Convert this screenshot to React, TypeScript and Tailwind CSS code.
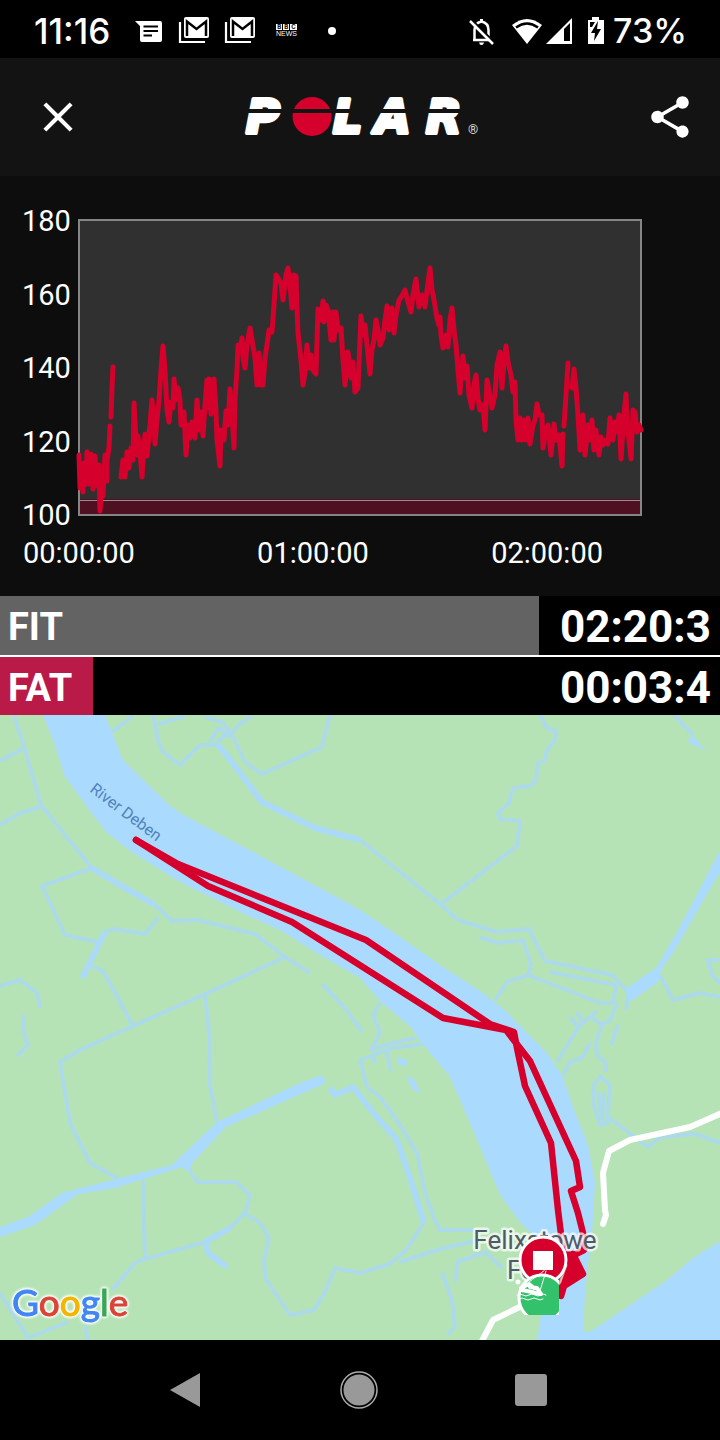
import React from "react";
import { MdClose, MdShare } from "react-icons/md";

const HEART_RATE: string[] = [
  "79,455 80,488 81,465 83,492 84,463 86,484 87,452 89,484 91,454 93,489 95,456 97,486 99,465 100,511 102,478 103,496 105,455 107,481 107,460 109,448 110,426",
  "111,417 112,388 113,367",
  "121,477 123,460 125,477 127,452 129,468 131,448 133,460 134,403 136,440 138,455 138,436 140,452 142,477 144,446 145,434 147,456 149,436",
  "149,434 150,425 152,400 155,444 157,420 159,400 161,370 163,346 165,370 167,410 169,422 171,402 173,408 174,379 176,400 178,388 180,400 181,425 184,412 186,455 188,425 190,438 192,422 195,438 197,400 199,430 201,412 203,436 205,405 207,380 209,408 209,379 211,414 214,379 216,412 217,440 220,466 221,430 224,440 226,411 228,425 230,389 232,415 234,448 235,400 237,370 238,345 240,353 242,338 243,358 245,368 247,345 250,328 252,340 255,358 257,385 259,353 261,385 263,385 265,358 267,345 269,330 272,332 274,305 276,275 278,278 281,283 283,300 286,275 288,268 290,285 292,308 294,275 296,276 297,310 298,333 301,360 303,385 305,373 307,345 309,368 311,355 313,370 316,374 318,309 321,320 323,301 324,322 326,305 328,310 331,340 333,312 334,340 336,312 338,330 341,328 343,360 345,385 348,352 351,378 353,362 355,392 358,388 360,340 361,316 363,335 365,325 367,345 370,374 372,350 374,340 376,320 378,330 380,345 383,338 385,320 387,306 389,330 392,308 394,333 396,315 399,300 402,296 405,290 408,302 411,312 413,295 416,279 419,307 422,295 425,307 427,290 430,268 432,290 434,300 437,318 439,325 440,317 441,335 443,348 446,335 448,347 450,320 452,308 454,330 456,345 458,370 460,393 463,356 465,378 467,366 469,395 472,408 474,385 476,375 478,398 480,410 483,405 485,430 487,380 489,390 492,408 495,395 497,365 500,352 502,388 504,360 506,346 508,362 511,375 513,392 515,382 516,420 518,440 520,418 522,440 524,420 526,440 528,418 530,444 533,425 535,420 537,404 539,415 542,415 543,448 546,430 548,425 551,455 554,424 556,440 559,435 562,466 563,434",
  "564,426 566,395 568,363",
  "572,388 574,369 576,388 578,415 580,450 583,415 585,455 588,425 590,440 592,420 594,450 596,430 599,455 601,437 603,445 605,440 608,444 610,418 613,440 615,422 617,432 619,415 621,459 624,415 626,394 627,420 629,440 631,459 633,410 635,412 637,432 639,425 641,430",
];

const DITCHES: string[] = [
  "14,715 25,750 41,805 65,835 92,868",
  "155,905 172,921 198,920 255,934 285,957 310,973",
  "322,984 345,1008 362,1032",
  "0,761 22,749",
  "0,825 20,813 38,808 41,803",
  "92,868 42,886 65,935 98,942",
  "105,932 115,929 145,934 158,918",
  "92,966 103,971 133,1026",
  "0,986 20,980 37,993 40,1008",
  "23,1015 24,1033 28,1045 17,1056",
  "283,958 205,994 133,1026 80,1050 60,1062 70,1123 90,1163 117,1178",
  "205,994 209,1033 210,1085 217,1122",
  "112,732 133,716",
  "153,715 158,740 163,752 180,765 200,745 218,745",
  "360,840 440,904 458,920 497,932 529,929 545,961 612,975 628,992",
  "158,724 185,716",
  "205,717 222,722 232,735 245,762 262,774 322,747 330,715",
  "232,733 240,724 252,716",
  "210,742 218,728 230,736",
  "216,743 224,736 232,735",
  "540,715 547,728 556,731 555,740 547,750 545,760 538,763 536,780 530,786 513,788 509,803 498,813 500,819 520,821 517,846 441,904",
  "674,715 693,735",
  "480,937 497,943 523,940 531,965 528,975 507,982 495,1000",
  "528,975 600,1003 613,1003 616,985 550,972",
  "660,975 673,1000 700,993 720,997",
  "720,960 708,960 712,975 720,983",
  "628,992 626,1010",
  "557,1062 580,1025 597,1011",
  "570,1017 578,1027",
  "577,1012 582,1022",
  "617,1003 610,1020 602,1025 592,1018",
  "602,1025 596,1043 597,1055 605,1062 606,1072",
  "590,1043 582,1058 570,1062 563,1075",
  "618,1025 611,1045",
  "602,1075 594,1085 593,1102 600,1125 607,1123 610,1085 602,1078",
  "598,1092 602,1120 604,1092",
  "608,1117 632,1135 648,1147 660,1137 695,1134 720,1143",
  "380,1003 373,1015 380,1033 371,1050 392,1043 415,1038",
  "430,1043 392,1048 360,1060 367,1087 380,1097 400,1125 417,1153 425,1193 434,1218",
  "386,1050 391,1071",
  "372,1056 376,1063",
  "143,1180 145,1259",
  "190,1172 198,1182 236,1182 250,1195 245,1213 230,1228",
  "205,1242 145,1259 135,1263 112,1290",
  "244,1213 260,1223 269,1238 264,1260 265,1278 290,1315 314,1310 326,1290 335,1268 360,1273 390,1264 406,1250 424,1223",
  "0,1293 28,1338 68,1322",
  "85,1325 88,1340",
  "434,1218 440,1230 475,1230",
  "400,1262 440,1249 475,1241",
  "456,1282 457,1262 485,1252 502,1268",
  "442,1272 452,1300 455,1326 447,1335",
];

const WIDE_DITCHES: string[] = [
  "92,868 120,885 155,905",
  "82,978 105,932",
  "218,745 228,757 262,802 315,828 360,840",
  "330,1088 335,1095 353,1087 375,1115 397,1140 410,1178 424,1223",
  "230,1228 205,1242",
  "206,1243 208,1253 227,1267",
];

const RIVER =
  "43,715 55,745 64,775 82,800 106,832 133,853 180,882 240,912 280,930 320,955 360,978 380,1001 413,1029 417,1037 450,1077 473,1130 500,1195 520,1222 538,1240 541,1316 537,1340 720,1340 720,1241 693,1258 667,1280 627,1307 590,1332 583,1331 583,1320 587,1273 592,1233 595,1183 588,1145 573,1107 563,1077 547,1053 527,1033 507,1012 483,993 443,967 393,932 360,910 333,895 253,852 180,813 167,803 123,760 105,715";

const ZONES = [
  { name: "FIT", time: "02:20:3", share: 74.9, color: "bg-[#636363]", height: "h-[59px]" },
  { name: "FAT", time: "00:03:4", share: 12.9, color: "bg-[#b91a48]", height: "h-[58px]" },
];

function GmailStack() {
  return (
    <svg className="h-8 w-8" viewBox="0 0 32 32" fill="none" stroke="#fff">
      <rect x="6" y="2" width="25" height="21" rx="2" fill="#fff" stroke="none" />
      <path d="M9 21V6.500L18.500 14L28 6.500V21" stroke="#000" strokeWidth="2.500" />
      <path d="M2 7V27H27" strokeWidth="2.200" />
    </svg>
  );
}

function StatusBar() {
  return (
    <div className="flex h-[58px] items-center justify-between bg-black pt-[3px] pl-[34px] pr-[33px] font-['Inter',sans-serif] font-medium text-white">
      <div className="flex items-center">
        <span className="w-[101px] text-[35px] leading-10">11:16</span>
        <svg className="h-6 w-[27px]" viewBox="0 0 27 24">
          <path d="M0 2H25Q27 2 27 4V21Q27 23 25 23H7Q5 23 5 21V7Z" fill="#fff" />
          <path d="M8.500 7.500H23M8.500 12H23M8.500 16.500H17" stroke="#000" strokeWidth="2" />
        </svg>
        <span className="ml-4 flex gap-[14px]">
          <GmailStack />
          <GmailStack />
        </span>
        <span className="ml-[19px] flex w-[23px] flex-col items-center">
          <span className="flex gap-px text-[6px] leading-[6px] font-bold text-black">
            <span className="bg-white px-px">B</span>
            <span className="bg-white px-px">B</span>
            <span className="bg-white px-px">C</span>
          </span>
          <span className="font-['Liberation_Sans',sans-serif] text-[7px] leading-2">NEWS</span>
        </span>
        <span className="ml-[30px] h-2 w-2 rounded-full bg-white" />
      </div>
      <div className="flex items-center">
        <svg className="h-8 w-7" viewBox="0 0 28 32" fill="none" stroke="#fff" strokeWidth="2.500">
          <path d="M6 25H23M7.500 25V15Q7.500 8 14.500 6.500Q21.500 8 21.500 15V24" />
          <path d="M12 27.500H17Q16.500 30 14.500 30Q12.500 30 12 27.500Z" fill="#fff" stroke="none" />
          <path d="M14.500 4V7" strokeWidth="3" />
          <path d="M4.500 4.500L28 28" stroke="#000" strokeWidth="2" />
          <path d="M3 6L26 29" />
        </svg>
        <svg className="ml-4 h-7 w-8" viewBox="0 0 32 28">
          <path d="M16 27L1 8Q16 -4 31 8Z" fill="#fff" />
          <path d="M5 10.500Q16 2.500 27 10.500" fill="none" stroke="#000" strokeWidth="2.500" />
        </svg>
        <svg className="ml-[2px] h-7 w-7" viewBox="0 0 28 28">
          <path d="M1 27L27 1V27Z" fill="#fff" />
          <path d="M19 24V12L25 6V24Z" fill="#000" />
        </svg>
        <svg className="ml-[14px] h-7 w-[18px]" viewBox="0 0 18 28">
          <path d="M1 3H5V0H12V3H17V27H1Z" fill="#fff" />
          <path d="M11 4L4 16H8L7 24L14 12H10Z" fill="#000" />
          <path d="M3 5H8L5 10H3Z" fill="#000" />
        </svg>
        <span className="ml-2 text-[34px] leading-10">73%</span>
      </div>
    </div>
  );
}

function PolarLogo() {
  return (
    <svg className="h-[82px] w-[248px]" viewBox="240 76 248 82" role="img" aria-label="Polar">
      <circle cx="312" cy="116.500" r="19.500" fill="#d5002b" />
      <g
        className="font-['DejaVu_Sans',sans-serif] text-[46px] font-bold italic"
        fill="#fff"
        stroke="#fff"
        strokeWidth="4"
        strokeLinejoin="round"
      >
        <text x="246" y="133">P</text>
        <text x="333" y="133">L</text>
        <text x="375" y="133">A</text>
        <text x="426" y="133">R</text>
      </g>
      <rect x="240" y="109" width="230" height="4" fill="#131313" />
      <text x="468" y="134" className="font-['Roboto',sans-serif] text-[13px]" fill="#ddd">®</text>
    </svg>
  );
}

function Header() {
  return (
    <header className="flex h-[118px] items-center justify-between bg-[#131313] pl-[25px] pr-[17px] text-white">
      <button type="button" aria-label="Close" className="flex h-[66px] w-[66px] items-center justify-center">
        <MdClose size={50} />
      </button>
      <PolarLogo />
      <button type="button" aria-label="Share" className="flex h-[66px] w-[66px] items-center justify-center">
        <MdShare size={50} />
      </button>
    </header>
  );
}

function HeartRateChart() {
  return (
    <section className="bg-[#0d0d0d] pt-[27px] pb-[25px] text-[29px] leading-9 text-white">
      <div className="flex pl-[22px]">
        <div className="flex w-[54px] flex-col justify-between">
          <span>180</span>
          <span>160</span>
          <span>140</span>
          <span>120</span>
          <span>100</span>
        </div>
        <svg className="mt-[14px] mb-[15px] mr-[76px] min-w-0 flex-1" viewBox="76 217 568 301" role="img" aria-label="Heart rate">
          <rect x="79" y="220" width="562" height="295" fill="#303030" />
          <rect x="79" y="499" width="562" height="16" fill="#4f1022" />
          <path d="M79 500.500H641" stroke="#a08a90" />
          <rect x="79" y="220" width="562" height="295" fill="none" stroke="#858585" strokeWidth="2" />
          <g fill="none" stroke="#d5002b" strokeWidth="5" strokeLinejoin="round" strokeLinecap="round">
            {HEART_RATE.map((points) => (
              <polyline key={points.slice(0, 7)} points={points} />
            ))}
          </g>
        </svg>
      </div>
      <div className="mt-[2px] flex justify-between pl-[23px] pr-[117px]">
        <span>00:00:00</span>
        <span>01:00:00</span>
        <span>02:00:00</span>
      </div>
    </section>
  );
}

function Zones() {
  return (
    <section className="flex flex-col gap-[2px] bg-white font-bold text-white">
      {ZONES.map((zone) => (
        <div key={zone.name} className={`flex items-center justify-between bg-black pr-[9px] ${zone.height}`}>
          <div
            className={`flex h-full items-center pt-[3px] pl-2 text-[38px] leading-[56px] ${zone.color}`}
            style={{ width: `calc((100% + 9px) * ${zone.share / 100})` }}
          >
            {zone.name}
          </div>
          <span className="pt-[3px] text-[44px] leading-[56px]">{zone.time}</span>
        </div>
      ))}
    </section>
  );
}

function RouteMap() {
  return (
    <section>
      <svg className="block h-auto w-full" viewBox="0 715 720 625" role="img" aria-label="Route map">
        <defs>
          <clipPath id="start-clip">
            <rect x="514" y="1270" width="45" height="45" />
          </clipPath>
        </defs>
        <rect x="0" y="714" width="720" height="626" fill="#b5e3b5" />
        <g fill="none" stroke="#acdaeb" strokeWidth="4" strokeLinejoin="round">
          {DITCHES.map((points) => (
            <polyline key={points} points={points} />
          ))}
        </g>
        <g fill="none" stroke="#abdaf8" strokeWidth="6" strokeLinejoin="round">
          {WIDE_DITCHES.map((points) => (
            <polyline key={points} points={points} />
          ))}
        </g>
        <g fill="#abdaff">
          <polygon points={RIVER} />
          <polygon points="720,850 706,877 693,902 676,934 656,968 625,989 630,1002 658,982 662,968 673,953 700,906 720,872" />
          <polygon points="0,1227 28,1217 62,1193 112,1180 172,1165 217,1122 300,1083 322,1075 326,1083 226,1127 192,1163 190,1173 182,1167 115,1188 78,1194 35,1225 0,1237" />
          <polygon points="692,735 706,751 688,742" />
          <polygon points="397,1057 408,1060 405,1067 398,1063" />
          <polygon points="406,1076 414,1079 421,1093 413,1090" />
        </g>
        <g fill="none" stroke="#fff" strokeWidth="6" strokeLinejoin="round" strokeLinecap="round">
          <polyline points="722,1113 690,1127 630,1140 609,1151 603,1173 605,1210 606,1215 603,1224" />
          <polyline points="530,1302 493,1320 482,1341" />
        </g>
        <g fill="none" stroke="#d5002b" strokeWidth="6.500" strokeLinejoin="round" strokeLinecap="round">
          <polyline points="136,840 178,864 366,940 490,1024 514,1032 517,1048 525,1086 551,1143 558,1210 563,1250" />
          <polyline points="136,840 208,886 292,922 443,1018 506,1030 530,1061 576,1161 580,1187 571,1191 578,1213 583,1233 584,1250 574,1255" />
          <polygon points="573,1254 583,1274 564,1286 561,1296 556,1290 562,1254" fill="#d5002b" />
        </g>
        <g
          className="font-['Roboto',sans-serif] text-[26px]"
          fill="#4f5b66"
          stroke="#fff"
          strokeOpacity="0.7"
          strokeWidth="5"
          strokeLinejoin="round"
          paintOrder="stroke"
          textAnchor="middle"
        >
          <text x="535" y="1249">Felixstowe</text>
          <text x="536" y="1279">Ferry</text>
        </g>
        <text
          transform="translate(89 791) rotate(37)"
          className="font-['Roboto',sans-serif] text-[16px]"
          fill="#5182ba"
        >
          River Deben
        </text>
        <circle cx="543" cy="1262" r="24" fill="#777" opacity="0.4" />
        <circle cx="543" cy="1260" r="23" fill="#d5002b" stroke="#fff" strokeWidth="3" />
        <rect x="533" y="1251" width="20" height="19" fill="#fff" />
        <g clipPath="url(#start-clip)">
          <circle cx="542" cy="1298" r="23" fill="#33c26b" stroke="#fff" strokeWidth="3" />
        </g>
        <g fill="none" stroke="#fff" strokeWidth="2" strokeLinecap="round" strokeLinejoin="round">
          <circle cx="518" cy="1282" r="1.500" fill="#fff" />
          <path d="M521 1288L529 1284L534 1288M522 1290L532 1292L541 1294M530 1287L537 1288L541 1294" strokeWidth="4" />
          <path d="M529 1282L545 1270M546 1271L540 1291" strokeWidth="1" strokeDasharray="4 1" />
          <path d="M517 1295Q520 1293 523 1295T529 1295T535 1295T541 1295T546 1295M519 1299Q522 1297 525 1299T531 1299T537 1299T543 1299" strokeWidth="1" />
        </g>
        <text
          x="12"
          y="1316"
          className="font-['Lato',sans-serif] text-[37px] [filter:drop-shadow(0_0_1px_#fff)_drop-shadow(0_0_1px_#fff)_drop-shadow(0_0_1px_#fff)]"
          strokeWidth="1"
        >
          <tspan fill="#4285f4" stroke="#4285f4">G</tspan>
          <tspan fill="#db4437" stroke="#db4437">o</tspan>
          <tspan fill="#f4b400" stroke="#f4b400">o</tspan>
          <tspan fill="#4285f4" stroke="#4285f4">g</tspan>
          <tspan fill="#3aa757" stroke="#3aa757">l</tspan>
          <tspan fill="#db4437" stroke="#db4437">e</tspan>
        </text>
      </svg>
    </section>
  );
}

function NavigationBar() {
  return (
    <nav className="flex h-[100px] items-center justify-between bg-black pl-[166px] pr-[169px]">
      <button type="button" aria-label="Back">
        <svg className="block h-10 w-10" viewBox="0 0 40 40">
          <path d="M4 20L34 3V37Z" fill="#999" />
        </svg>
      </button>
      <button type="button" aria-label="Home">
        <svg className="block h-10 w-10" viewBox="0 0 40 40">
          <circle cx="20" cy="20" r="18" fill="none" stroke="#aaa" strokeWidth="1.500" />
          <circle cx="20" cy="20" r="15.500" fill="#999" />
        </svg>
      </button>
      <button type="button" aria-label="Recent apps">
        <svg className="block h-10 w-10" viewBox="0 0 40 40">
          <rect x="4" y="4" width="32" height="32" rx="3" fill="#999" />
        </svg>
      </button>
    </nav>
  );
}

export default function App() {
  return (
    <div className="min-h-screen bg-black font-['Roboto',sans-serif]">
      <StatusBar />
      <Header />
      <main>
        <HeartRateChart />
        <Zones />
        <RouteMap />
      </main>
      <NavigationBar />
    </div>
  );
}
